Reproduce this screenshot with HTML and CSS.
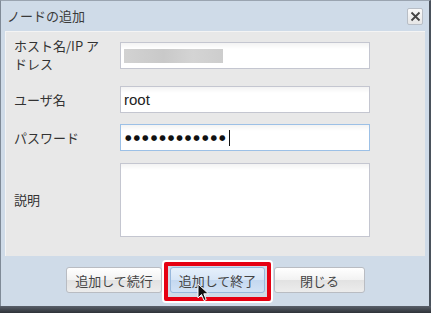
FILE: index.html
```html
<!DOCTYPE html>
<html lang="ja">
<head>
    <meta charset="UTF-8">
    <title>ノードの追加</title>
    <link rel="stylesheet" href="styles.css">
</head>
<body>
    <div class="dialog">
        <div class="titlebar">
            <span class="title">ノードの追加</span>
            <span class="close">
                <svg width="11" height="11" viewBox="0 0 11 11"><path d="M1.5 1.5 L9.5 9.5 M9.5 1.5 L1.5 9.5" stroke="#444" stroke-width="1.8" fill="none"/></svg>
            </span>
        </div>

        <div class="panel">
            <div class="row row-host">
                <label class="label">ホスト名/IP ア<br>ドレス</label>
                <div class="field"><span class="blur"></span></div>
            </div>
            <div class="row row-user">
                <label class="label">ユーザ名</label>
                <div class="field">root</div>
            </div>
            <div class="row row-pass">
                <label class="label">パスワード</label>
                <div class="field focused"><span class="dots">●●●●●●●●●●●●</span><span class="caret"></span></div>
            </div>
            <div class="row row-desc">
                <label class="label">説明</label>
                <div class="field area"></div>
            </div>
        </div>

        <div class="buttons">
            <button class="btn">追加して続行</button>
            <button class="btn primary marked">追加して終了</button>
            <button class="btn close-btn">閉じる</button>
            <svg class="cursor" width="14" height="20" viewBox="0 0 14 20"><path d="M1 1 L1 15 L4.5 11.5 L7 17.5 L9.2 16.6 L6.8 10.8 L11.5 10.8 Z" fill="#111" stroke="#fff" stroke-width="1"/></svg>
        </div>

        <div class="taskbar"></div>
    </div>
</body>
</html>
```

FILE: styles.css
```css
body {
    margin: 0;
    font-family: "Noto Sans CJK JP", "Noto Sans", sans-serif;
    background-color: #3a3f47;
}

.dialog {
    position: relative;
    width: 431px;
    height: 313px;
    box-sizing: border-box;
    background-color: #cfdbe8;
    border-top: 1px solid #9aa4b0;
    border-left: 1px solid #7f8a97;
    border-right: 2px solid #4a525c;
    display: flex;
    flex-direction: column;
}

.titlebar {
    height: 30px;
    display: flex;
    align-items: center;
    justify-content: space-between;
    padding: 0 6px 0 6px;
}

.title {
    font-size: 13px;
    color: #3a3a3a;
    margin-top: -1px;
}

.close {
    width: 14px;
    height: 15px;
    display: flex;
    align-items: center;
    justify-content: center;
    background: linear-gradient(#fafafa, #e6e6e6);
    border: 1px solid #b8bec6;
    border-radius: 2px;
    margin-top: 1px;
}

.panel {
    margin: 0 4px;
    height: 225px;
    box-sizing: border-box;
    background-color: #e8e8e8;
    border-top: 1px solid #f4f4f4;
    border-left: 1px solid #f4f4f4;
    padding: 5px 0 0 8px;
}

.row {
    display: flex;
    align-items: center;
}

.label {
    width: 106px;
    font-size: 13px;
    line-height: 18px;
    color: #333;
}

.field {
    width: 245px;
    height: 25px;
    border: 1px solid #c4c6d0;
    background: linear-gradient(#f3f3f3, #ffffff 6px);
    display: flex;
    align-items: center;
    padding-left: 3px;
    box-sizing: content-box;
    font-family: "Liberation Sans", "Noto Sans", sans-serif;
    font-size: 15px;
    color: #222;
}

.field.focused {
    border-color: #9cc0e6;
}

.field.area {
    height: 72px;
}

.row-host {
    align-items: flex-start;
}

.row-host .field {
    margin-top: 5px;
}

.row-user {
    margin-top: 13px;
}

.row-pass {
    margin-top: 11px;
}

.row-desc {
    margin-top: 12px;
}

.blur {
    width: 99px;
    height: 14px;
    background: linear-gradient(90deg, #d2d2d2, #c9c9c9 40%, #d4d4d4 70%, #cdcdcd);
}

.dots {
    font-family: "DejaVu Sans", sans-serif;
    font-size: 7.5px;
    letter-spacing: 2px;
    color: #111;
    margin-left: 1px;
}

.caret {
    width: 1px;
    height: 16px;
    background-color: #111;
    margin-left: 1px;
}

.buttons {
    position: relative;
    display: flex;
    align-items: center;
    padding-left: 65px;
    margin-top: 11px;
    gap: 8px;
}

.btn {
    height: 26px;
    width: 96px;
    font-family: "Noto Sans CJK JP", "Noto Sans", sans-serif;
    font-size: 13px;
    color: #444;
    background: linear-gradient(#ffffff, #f2f2f2 50%, #e2e2e2 51%, #ececec);
    border: 1px solid #b9bcc2;
    border-radius: 3px;
    padding: 0;
}

.btn.primary {
    width: 95px;
    background: linear-gradient(#e6f0fb, #d6e5f6 50%, #c4d8f0 51%, #d2e2f5);
    border-color: #98b8dc;
}

.close-btn {
    width: 91px;
    margin-left: 1px;
}

.marked {
    position: relative;
}

.marked::after {
    content: "";
    position: absolute;
    left: -7px;
    right: -7px;
    top: -6px;
    bottom: -9px;
    border: 4px solid #e60012;
    box-shadow: 0 0 0 2px #ffffff;
    border-radius: 2px;
}

.cursor {
    position: absolute;
    left: 196px;
    top: 16px;
}

.taskbar {
    position: absolute;
    left: -1px;
    right: -2px;
    bottom: 0;
    height: 7px;
    background: linear-gradient(#5a606a, #2e3238);
}
```
